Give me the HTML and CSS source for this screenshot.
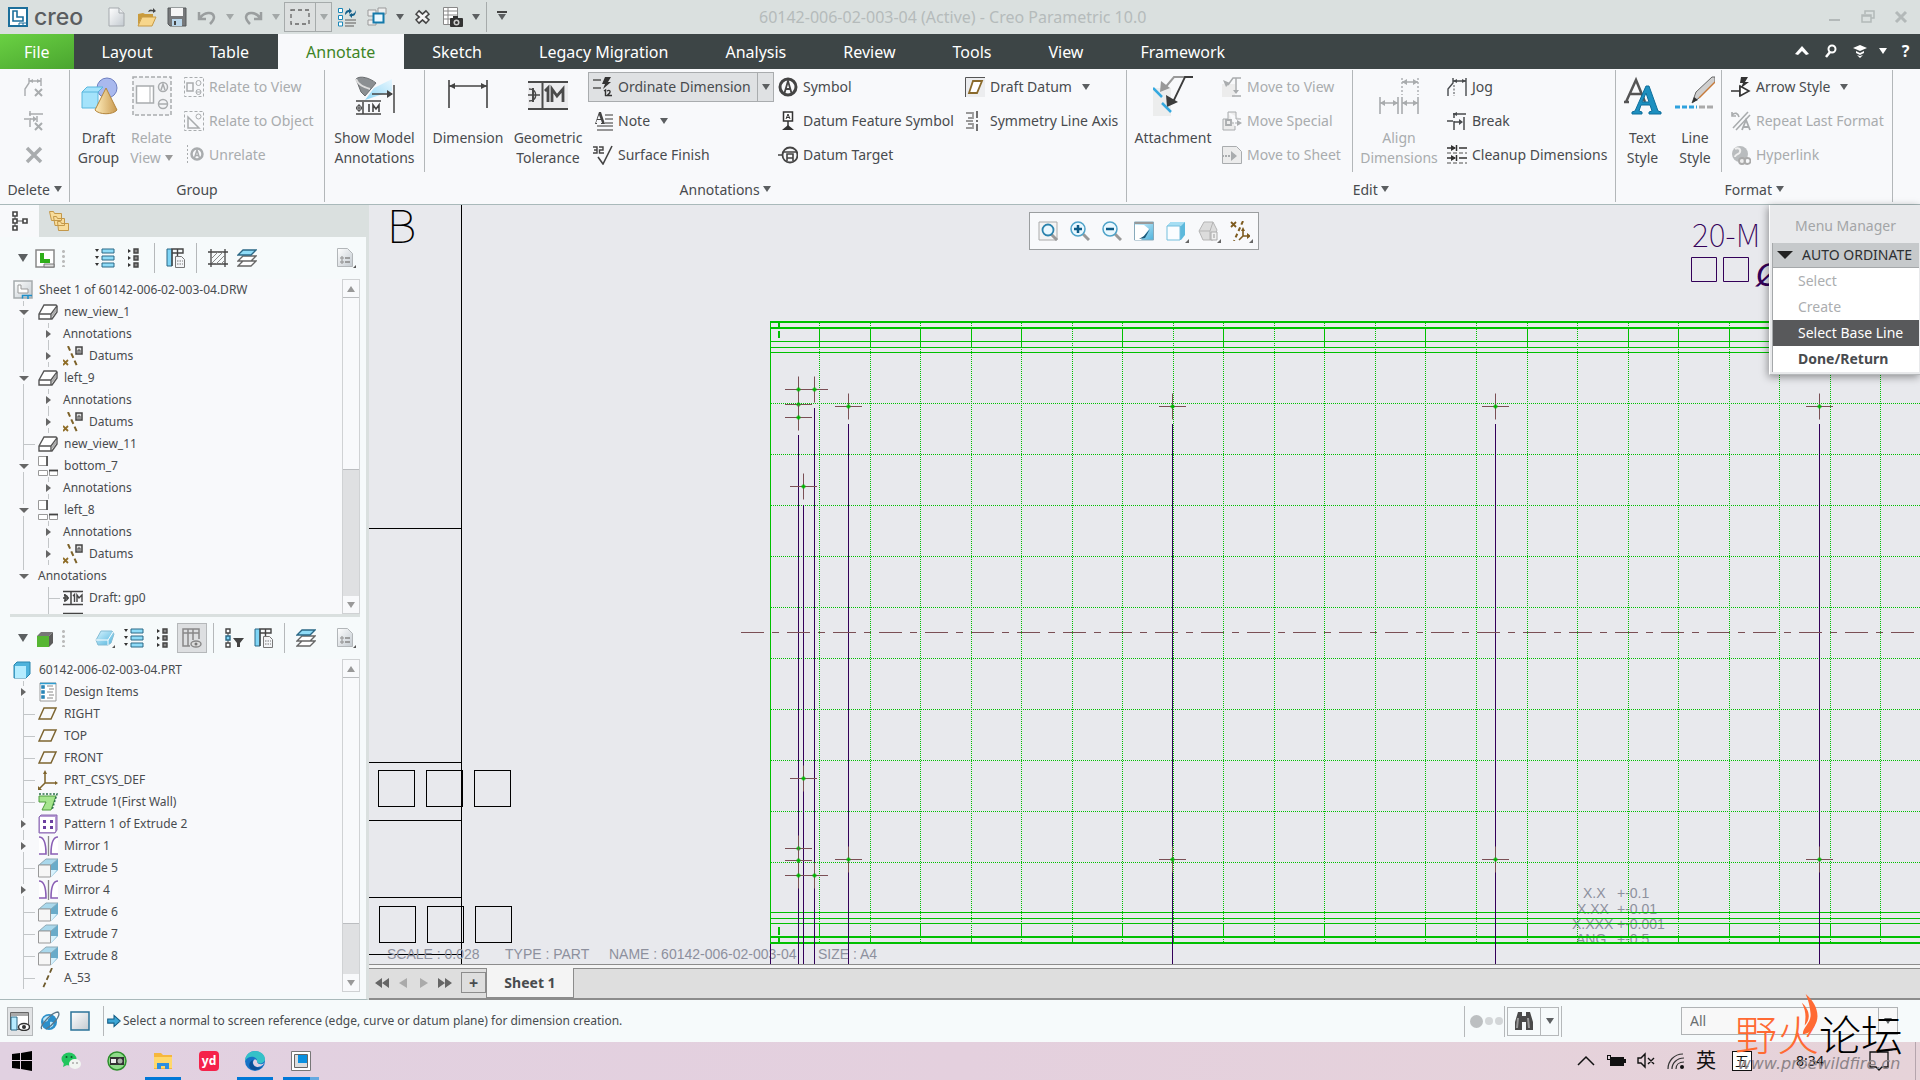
FILE: index.html
```html
<!DOCTYPE html>
<html lang="en">
<head>
    <meta charset="UTF-8">
    <meta name="viewport" content="width=device-width, initial-scale=1.0">
    <title>60142-006-02-003-04 (Active) - Creo Parametric 10.0</title>
    <link rel="stylesheet" href="styles.css">
</head>
<body>
    <!-- icon sprite -->
    <svg class="sprite" aria-hidden="true">
        <defs>
            <linearGradient id="gBlue" x1="0" y1="0" x2="1" y2="1"><stop offset="0" stop-color="#d8f4ff"/><stop offset="1" stop-color="#4fb3dc"/></linearGradient>
            <linearGradient id="gGrey" x1="0" y1="0" x2="1" y2="1"><stop offset="0" stop-color="#fff"/><stop offset="1" stop-color="#c3cad0"/></linearGradient>
            <linearGradient id="gSand" x1="0" y1="0" x2="1" y2="0"><stop offset="0" stop-color="#ffeebd"/><stop offset="1" stop-color="#c9994f"/></linearGradient>
            <linearGradient id="gBeam" x1="0" y1="1" x2="1" y2="0"><stop offset="0" stop-color="#8fd6f5"/><stop offset="1" stop-color="#e8f7ff"/></linearGradient>
        </defs>
        <symbol id="i-new" viewBox="0 0 20 20"><path d="M2 1h10l5 5v13H2z" fill="url(#gGrey)" stroke="#a4a9ad"/><path d="M12 1v5h5" fill="#e9ecee" stroke="#a4a9ad"/></symbol>
        <symbol id="i-open" viewBox="0 0 20 20"><path d="M1 7l5-1 2 1h8v3H5L1 18z" fill="#c99b3c"/><path d="M5 10h14l-4 9H1z" fill="#f7d68b" stroke="#c79a45"/><path d="M11 5c1-3 3-3 5-2V1l3 3-3 2V4.500c-2-.5-3 0-5 .5z" fill="#444"/></symbol>
        <symbol id="i-save" viewBox="0 0 20 20"><path d="M1 1h18v18H3l-2-2z" fill="#77797b" stroke="#55585a"/><path d="M4 1h12v8H4z" fill="#f6f6f6"/><path d="M5 12h10v7H5z" fill="#b9d6ea"/><path d="M7 14h2v4H7z" fill="#444"/></symbol>
        <symbol id="i-undo" viewBox="0 0 20 20"><path d="M2 5v7h7M3 11c4-6 13-7 14-1 0 3-2 5-4 7" fill="none" stroke="#9a9e9f" stroke-width="2.500"/></symbol>
        <symbol id="i-redo" viewBox="0 0 20 20"><path d="M18 5v7h-7M17 11C13 5 4 4 3 10c0 3 2 5 4 7" fill="none" stroke="#9a9e9f" stroke-width="2.500"/></symbol>
        <symbol id="i-select" viewBox="0 0 20 20"><path d="M1 3h18v14H1z" fill="none" stroke="#666" stroke-width="1.300" stroke-dasharray="4 3"/></symbol>
        <symbol id="i-regen" viewBox="0 0 20 20"><g fill="#fff" stroke="#1b87b8"><path d="M1.500 1.500h4v4h-4zM1.500 8.500h4v4h-4zM1.500 15h4v4h-4z"/></g><path d="M8 13h11M8 16h11M8 19h9" stroke="#888" stroke-width="1.500"/><path d="M8 8c0-4 2-5 4-5V1l3 3-3 3V5c-1 0-2 1-4 3zM19 3c0 5-2 6-4 6v2l-3-3 3-2v1c1 0 3-1 4-4z" fill="#16618c"/></symbol>
        <symbol id="i-windows" viewBox="0 0 20 20"><path d="M1 3h8v6H1zM1 13h8v5H1zM11 1h8v6h-8z" fill="#eee" stroke="#999"/><path d="M6.500 6.500h10v9h-10z" fill="#eaf8ff" stroke="#157aab" stroke-width="2"/></symbol>
        <symbol id="i-closewin" viewBox="0 0 20 20"><path d="M4 5l11 10M15 5L4 15" stroke="#444" stroke-width="6"/><path d="M5 6l9 8M14 6l-9 8" stroke="#f5f5f5" stroke-width="3"/></symbol>
        <symbol id="i-camera" viewBox="0 0 20 20"><path d="M.5.5h14v17H.5z" fill="#fff" stroke="#888"/><path d="M1 4h13M1 8h13M1 12h8M5 1v16" stroke="#888"/><rect x="7" y="11" width="13" height="9" rx="1" fill="#333"/><path d="M10 9h5v3h-5z" fill="#333"/><circle cx="13.500" cy="15.500" r="3" fill="#ccc"/><circle cx="13.500" cy="15.500" r="1.500" fill="#333"/></symbol>
        <symbol id="i-logo" viewBox="0 0 20 20"><path d="M1 1h18v18H1z" fill="#fff" stroke="#1c6f9b" stroke-width="2"/><path d="M5 4h4v6h6v4H5z" fill="none" stroke="#1c6f9b" stroke-width="1.600"/><path d="M11 19v-3h8M15 16v3" fill="none" stroke="#1c6f9b"/></symbol>

        <symbol id="i-jog" viewBox="0 0 20 20"><path d="M1 19v-7l5-6V1M19 1v18M6 4h13" fill="none" stroke="currentColor" stroke-width="1.400"/><path d="M7 8v11" stroke="currentColor" stroke-dasharray="2 1.500"/><path d="M6 4l4-2v4zM19 4l-4-2v4z" fill="currentColor"/></symbol>
        <symbol id="i-jogdel" viewBox="0 0 20 20"><path d="M1 19v-7l4-6V1M17 1v8M5 4h12" fill="none" stroke="currentColor" stroke-width="1.400"/><path d="M5 4l4-2v4zM17 4l-4-2v4z" fill="currentColor"/><path d="M11 12l7 7M18 12l-7 7" stroke="currentColor" stroke-width="2"/></symbol>
        <symbol id="i-break" viewBox="0 0 20 20"><path d="M0 10h6M7 2v5M7 10v9M6 3h13M17 6v13M7 11h7" stroke="currentColor" stroke-width="1.500"/><path d="M12 8l4 3-4 3zM6 3l4-2v4z" fill="currentColor"/></symbol>
        <symbol id="i-breakdel" viewBox="0 0 20 20"><path d="M0 8h5M6 0v5M6 7v9M5 3h14M13 5v6M6 8h6" stroke="currentColor" stroke-width="1.500"/><path d="M9 5l4 3-4 3z" fill="currentColor"/><path d="M11 12l7 7M18 12l-7 7" stroke="currentColor" stroke-width="2"/></symbol>
        <symbol id="i-x" viewBox="0 0 20 20"><path d="M3 3l14 14M17 3L3 17" stroke="currentColor" stroke-width="3.500"/></symbol>
        <symbol id="i-relview" viewBox="0 0 20 20"><path d="M.5.5h19v19H.5z" fill="none" stroke="currentColor" stroke-dasharray="3 2"/><path d="M3 6h6v8H3z" fill="none" stroke="currentColor" stroke-width="1.500"/><circle cx="14.500" cy="6" r="2.500" fill="none" stroke="currentColor"/><circle cx="14.500" cy="15" r="2.500" fill="none" stroke="currentColor"/><path d="M12 15h5" stroke="currentColor"/></symbol>
        <symbol id="i-relobj" viewBox="0 0 20 20"><path d="M.5.5h19v19H.5z" fill="none" stroke="currentColor" stroke-dasharray="3 2"/><path d="M4 6v11h11z" fill="none" stroke="currentColor" stroke-width="1.500"/><circle cx="14.500" cy="5.500" r="2.500" fill="none" stroke="currentColor"/></symbol>
        <symbol id="i-unrel" viewBox="0 0 20 20"><path d="M3.500 0v20" stroke="currentColor" stroke-dasharray="2 2"/><circle cx="13" cy="9" r="5.500" fill="none" stroke="currentColor" stroke-width="2.500"/><path d="M10.500 13L13 5l2.500 8M11 10.500h4" fill="none" stroke="currentColor" stroke-width="1.500"/></symbol>
        <symbol id="i-draft" viewBox="0 0 40 40"><circle cx="28" cy="12" r="10" fill="#a9b9ee" stroke="#6e7fc0"/><path d="M3 16l5-5h16l-5 5v16H3z" fill="#a4e3fb" stroke="#5ab7dd"/><path d="M3 16h16l5-5" fill="none" stroke="#5ab7dd"/><path d="M27 12l11 22c-4 5-18 5-22 0z" fill="url(#gSand)" stroke="#b3853c"/></symbol>
        <symbol id="i-relview-big" viewBox="0 0 40 40"><path d="M1 1h38v38H1z" fill="#f3f4f6" stroke="currentColor" stroke-width="1.500" stroke-dasharray="4 2"/><path d="M4.500 10h17v17h-17z" fill="#fff" stroke="currentColor" stroke-width="1.500"/><path d="M18 10v17" stroke="currentColor"/><circle cx="31" cy="11" r="4.500" fill="none" stroke="currentColor" stroke-width="1.500"/><path d="M29 14l2-6 2 6" fill="none" stroke="currentColor" stroke-width="1.500"/><circle cx="31" cy="28" r="4.500" fill="none" stroke="currentColor" stroke-width="1.500"/><path d="M27 28h8" stroke="currentColor" stroke-width="1.500"/></symbol>
        <symbol id="i-showmodel" viewBox="0 0 40 40"><path d="M19 12L37 3v12L10 24z" fill="url(#gBeam)"/><path d="M1 3c4-4 14-1 20 4L10 20 6 16z" fill="#8b8f92" stroke="#6b6e70"/><path d="M1 3c2 6 8 8 14 10" fill="none" stroke="#ddd" stroke-width="2"/><path d="M17 18h20M39 9v28" stroke="#444" stroke-width="1.500"/><path d="M32 14l6 4-6 4z" fill="#444"/><path d="M1 25h25M1 38h25M8 26v12" stroke="#444" stroke-width="1.500"/><circle cx="4" cy="32" r="2.500" fill="none" stroke="#444"/><path d="M1 32h6M4 28v8" stroke="#444"/><path d="M14 28v8M18 36v-7l3 4 3-4v7" fill="none" stroke="#444" stroke-width="1.600"/></symbol>
        <symbol id="i-dim" viewBox="0 0 40 40"><path d="M1 4v28M39 4v28M1 10h38" stroke="#444" stroke-width="1.600"/><path d="M1 10l6-3v6zM39 10l-6-3v6z" fill="#444"/></symbol>
        <symbol id="i-gtol" viewBox="0 0 40 40"><path d="M0 5h40v29H0z" fill="#ececee"/><path d="M0 6h40M0 33h40M14.500 6v27" stroke="#4a4a4a" stroke-width="2"/><path d="M5 12v14" stroke="#4a4a4a" stroke-width="2"/><path d="M1 13c9 0 9 12 0 12M0 19h12" fill="none" stroke="#4a4a4a" stroke-width="1.500"/><path d="M17 15l3-3v14M24 26V13l5 7 6-7v13" fill="none" stroke="#4a4a4a" stroke-width="2.800"/></symbol>
        <symbol id="i-ord" viewBox="0 0 20 20"><path d="M0 3h8M0 11h8" stroke="#555" stroke-width="1.500"/><path d="M12 0h6l-3 5h3l-8 7 2-5H9z" fill="#333"/><path d="M11 14l1.500-1v6M14 14c3-2 5 1 0 4.500h5" fill="none" stroke="#333" stroke-width="1.400"/></symbol>
        <symbol id="i-note" viewBox="0 0 20 20"><path d="M0 13h2L6 1h2l4 12h-4v-1h1L8 9H4l-1 3h1v1zM4.500 8h3L6 4z" fill="#444"/><path d="M12 4h8M12 8h8M12 12h8M4 15h16M4 19h16" stroke="#777" stroke-width="1.500"/></symbol>
        <symbol id="i-surf" viewBox="0 0 20 20"><path d="M0 2h4v6H0M1 5h3M6 2h4v3H6.500v3H11" fill="none" stroke="#444" stroke-width="1.400"/><path d="M5 12l5 7 9-18" fill="none" stroke="#444" stroke-width="1.600"/></symbol>
        <symbol id="i-symbol" viewBox="0 0 20 20"><circle cx="10" cy="10" r="8" fill="none" stroke="#444" stroke-width="3"/><path d="M6.500 16L10 4l3.500 12M8 12h4" fill="none" stroke="#444" stroke-width="1.800"/></symbol>
        <symbol id="i-dfs" viewBox="0 0 20 20"><path d="M5.500 1h9v9h-9z" fill="#fff" stroke="#333" stroke-width="1.500"/><path d="M8 8l2-5 2 5M8.500 6.500h3" fill="none" stroke="#333"/><path d="M10 10v6" stroke="#333" stroke-width="1.500"/><path d="M4 19l6-5 6 5z" fill="#333"/></symbol>
        <symbol id="i-dtarget" viewBox="0 0 20 20"><circle cx="12" cy="10" r="7.500" fill="none" stroke="#444" stroke-width="1.800"/><path d="M0 10h4M5 7h14M9 16V9h6v7M9 13h6" fill="none" stroke="#444" stroke-width="1.600"/></symbol>
        <symbol id="i-ddatum" viewBox="0 0 20 20"><path d="M0 0h20v20H0z" fill="#ecedef"/><path d="M.5 20V.5H20" fill="none" stroke="#555"/><path d="M8 4h9l-5 12H4z" fill="#fff" stroke="#8a6a2c" stroke-width="1.800"/></symbol>
        <symbol id="i-symline" viewBox="0 0 20 20"><path d="M1 2h7v5H3M1 10h7M1 17h7v-4H3" fill="none" stroke="#999" stroke-width="1.800"/><path d="M12 0v7M12 9v2M12 13v7" stroke="#444" stroke-width="1.500"/></symbol>
        <symbol id="i-attach" viewBox="0 0 40 40"><path d="M0 12h18v28H0z" fill="#eceded"/><path d="M36 1H21L11 13" fill="none" stroke="#999" stroke-width="2"/><path d="M7 16l1-11 9 7z" fill="#999"/><path d="M40 1h-8L20 26" fill="none" stroke="#3c3c3c" stroke-width="1.800"/><path d="M14 31l-1-12 12 7z" fill="#3c3c3c"/><path d="M0 12l9 9M9 27l9 9" stroke="#35a9e0" stroke-width="2.500"/></symbol>
        <symbol id="i-mvview" viewBox="0 0 20 20"><path d="M0 7h13v13H0z" fill="#ececec"/><path d="M19 1h-8L6 8M19 1h-5v14M10 19h9" fill="none" stroke="currentColor" stroke-width="1.500"/><path d="M1 3l3 7 4-4zM11 13h6l-3 4z" fill="currentColor"/></symbol>
        <symbol id="i-mvspec" viewBox="0 0 20 20"><path d="M6 1h8v7h5M6 1v7H1v11h12v-4" fill="#ececec" stroke="currentColor"/><path d="M4 9h5v5H4z" fill="none" stroke="currentColor" stroke-width="1.800"/><path d="M10 12h7" stroke="currentColor" stroke-dasharray="2 1"/><path d="M15 9l5 3-5 3z" fill="currentColor"/></symbol>
        <symbol id="i-mvsheet" viewBox="0 0 20 20"><path d="M.5 1.500h14l5 5v12H.500z" fill="#ececec" stroke="currentColor"/><path d="M0 11h12" stroke="currentColor" stroke-width="1.800" stroke-dasharray="2 1"/><path d="M9 6l6 5-6 5z" fill="currentColor"/></symbol>
        <symbol id="i-align" viewBox="0 0 40 40"><path d="M1 21v17M19 21v17M23 21v17M39 21v17M1 27h18M23 27h16M23 6h16" stroke="currentColor" stroke-width="1.600"/><path d="M23 2v17M39 2v17" stroke="currentColor" stroke-width="1.400" stroke-dasharray="2 2"/><path d="M1 27l5-3v6zM19 27l-5-3v6zM23 27l5-3v6zM39 27l-5-3v6zM23 6l5-3v6zM39 6l-5-3v6z" fill="currentColor"/></symbol>
        <symbol id="i-cleanup" viewBox="0 0 20 20"><path d="M0 3h8M0 13h8M12 3h8M12 13h8M9.500 0v6M9.500 10v6" stroke="#333" stroke-width="1.500"/><path d="M4 0l5 3-5 3zM4 10l5 3-5 3z" fill="#333"/><path d="M0 8h20M0 18h20" stroke="#888" stroke-dasharray="4 2" stroke-width="1.300"/></symbol>
        <symbol id="i-textstyle" viewBox="0 0 40 40"><path d="M3 26L13 4l9 22M6 18h12M1 26h5" fill="none" stroke="#555" stroke-width="2.500"/><path d="M9 38v-2l3-1L23 10h3l9 25 3 1v2H26v-2l3-1-2-6h-9l-2 6 3 1v2zM19 26h7l-3-9z" fill="#1d90c0" stroke="#0f6f9c"/></symbol>
        <symbol id="i-linestyle" viewBox="0 0 40 40"><path d="M0 31h22" stroke="#2fa2de" stroke-width="3" stroke-dasharray="5 2"/><path d="M24 31h16" stroke="#aaa" stroke-width="3" stroke-dasharray="6 2"/><path d="M17 27l4-11L37 1h3v5L24 22z" fill="#cfcfcf" stroke="#666"/><path d="M40 6L24 22" stroke="#c67a3a" stroke-width="1.500"/><path d="M17 27l2-6 4 3z" fill="#333"/></symbol>
        <symbol id="i-arrow" viewBox="0 0 20 20"><path d="M10 0h7l-3 5h4l-8 6 2-5H9z" fill="#333"/><path d="M0 14h18M9 9v10" stroke="#333" stroke-width="1.600"/><path d="M9 9l9 5-9 5z" fill="#fff" stroke="#333" stroke-width="1.600"/></symbol>
        <symbol id="i-repeat" viewBox="0 0 20 20"><path d="M2 17L17 1M5 19L19 4M1 4c3-3 6-2 7 2M1 1v4h4" fill="none" stroke="currentColor" stroke-width="1.600"/><path d="M11 19l4-10 4 10M12 16h6" fill="none" stroke="currentColor" stroke-width="1.800"/></symbol>
        <symbol id="i-link" viewBox="0 0 20 20"><circle cx="9" cy="9" r="8" fill="#b9bcbe"/><path d="M4 4c3-2 6 0 5 3s-5 2-5 5" fill="none" stroke="#eee" stroke-width="2"/><circle cx="11" cy="16" r="3" fill="#eee" stroke="#aaa" stroke-width="1.800"/><circle cx="16.500" cy="16" r="3" fill="none" stroke="#aaa" stroke-width="1.800"/></symbol>

        <symbol id="i-tree" viewBox="0 0 20 20"><path d="M5 5v10M6 10h8" stroke="#555"/><g fill="#fff" stroke="#444" stroke-width="1.600"><path d="M3 1h4v4H3zM3 8h4v4H3zM3 15h4v4H3zM13 8h4v4h-4z"/></g></symbol>
        <symbol id="i-folders" viewBox="0 0 20 20"><g fill="#f8dc9a" stroke="#c3984a"><path d="M.5.500h4l1 2h7v7h-10zM4.500 5.500h3l1 2h7v7H6zM8.500 10.500h3l1 2h7v7h-10z"/></g></symbol>
        <symbol id="i-drw" viewBox="0 0 20 20"><path d="M1 2h18v17H1z" fill="#fff" stroke="#888" stroke-width="1.500"/><path d="M5 5h4v6h6v4H5z" fill="#2fae1a"/><path d="M9 16h10v3H9z" fill="#ddd" stroke="#777"/></symbol>
        <symbol id="i-sheet" viewBox="0 0 20 20"><path d="M1 1h18v17H1z" fill="url(#gGrey)" stroke="#a5aaad" stroke-width="1.500"/><path d="M5 5h3v4h7v4H5z" fill="#fff" stroke="#999"/><path d="M9.500 18.500v-3H19M15 16v3" fill="none" stroke="#1d8fc9" stroke-width="1.500"/></symbol>
        <symbol id="i-expand" viewBox="0 0 20 20"><path d="M0 1h4L2 4zM0 8h4l-2 3zM0 15h4l-2 3z" fill="#333"/><path d="M7 1h12v4H7zM7 8h12v4H7zM7 15h12v4H7z" fill="#8fdcf8" stroke="#2b6886"/></symbol>
        <symbol id="i-collapse" viewBox="0 0 20 20"><path d="M4 1v4l3-2zM4 8v4l3-2zM4 15v4l3-2z" fill="#333"/><path d="M10 1h4v4h-4zM10 8h4v4h-4zM10 15h4v4h-4z" fill="#888" stroke="#444" stroke-width="1.400"/></symbol>
        <symbol id="i-cols" viewBox="0 0 20 20"><path d="M1 1h5v17H1z" fill="#7fd5f6" stroke="#2b6886"/><path d="M6 1h11v4H6zM11.500 1v10M6 5v13" fill="none" stroke="#444" stroke-width="1.400"/><path d="M9.500 8.500h6l3 3v8h-9z" fill="#f4f6f8" stroke="#777"/><path d="M11 13h6M11 16h6" stroke="#777" stroke-dasharray="1.500 1"/></symbol>
        <symbol id="i-hatch" viewBox="0 0 20 20"><path d="M0 4h20M0 16h20M3 1v18M17 1v18" stroke="#444" stroke-width="1.300"/><path d="M4 10l6-6M4 15L15 4M8 16l8-8M13 16l3-3" stroke="#888"/></symbol>
        <symbol id="i-layers" viewBox="0 0 20 20"><path d="M1 18l5-5h13l-5 5zM1 13l5-5h13l-5 5z" fill="#fff" stroke="#666" stroke-width="1.300"/><path d="M1 7l5-5h13l-5 5z" fill="#8fdcf8" stroke="#2b6886" stroke-width="1.300"/></symbol>
        <symbol id="i-page" viewBox="0 0 20 20"><path d="M1.500.5h10l5 5v13h-15z" fill="url(#gGrey)" stroke="#b2b6b9"/><circle cx="6" cy="10" r="1.200" fill="none" stroke="#888"/><circle cx="6" cy="14" r="1.200" fill="none" stroke="#888"/><path d="M9 10h5M9 14h5" stroke="#888" stroke-width="1.400"/><path d="M20 17v3h-3z" fill="#555"/></symbol>
        <symbol id="i-cube" viewBox="0 0 20 20"><path d="M2 8h12v11H2z" fill="#56b633"/><path d="M2 8l4-4h12l-4 4z" fill="#777"/><path d="M14 8l4-4v11l-4 4z" fill="#5c5c5c"/></symbol>
        <symbol id="i-solid" viewBox="0 0 20 20"><path d="M1 12l5-9h11l2 3-3 9-3 2H3z" fill="url(#gBlue)" stroke="#86bcd4"/><path d="M1 12h12l5-8M13 12v5" fill="none" stroke="#fff"/><path d="M20 17v3h-3z" fill="#555"/></symbol>
        <symbol id="i-coleye" viewBox="0 0 20 20"><path d="M1 1h16v4H1zM1 5v13h7M6 1v17M11 1v11M17 5v6" fill="none" stroke="#888" stroke-width="1.500"/><ellipse cx="14" cy="16" rx="5" ry="3" fill="#ddd" stroke="#888" stroke-width="1.400"/><circle cx="14" cy="16" r="1.500" fill="#777"/></symbol>
        <symbol id="i-filter" viewBox="0 0 20 20"><path d="M3 5v12" stroke="#444"/><path d="M1 1h4v4H1zM1 15h4v4H1z" fill="#fff" stroke="#444" stroke-width="1.400"/><path d="M1 8h4v4H1z" fill="#7fd5f6" stroke="#2b6886" stroke-width="1.400"/><path d="M8 10h11l-4 5v4h-3v-4z" fill="#444"/></symbol>
        <symbol id="i-view" viewBox="0 0 20 20"><path d="M1 12L6 3h12l1 1v6l-5 7H1z" fill="#fff" stroke="#555" stroke-width="1.400"/><path d="M1 12h12l6-8M13 12v5" fill="none" stroke="#555" stroke-width="1.400"/><path d="M14 12l4-6v4l-4 5z" fill="#aaa"/></symbol>
        <symbol id="i-datums" viewBox="0 0 20 20"><path d="M5 0l9 20" stroke="#7d6229" stroke-width="2" stroke-dasharray="5 3"/><path d="M0 14l5 5M5 14l-5 5" stroke="#8f6d27" stroke-width="1.800"/><path d="M13 1h6v7h-6z" fill="#ddd" stroke="#444" stroke-width="1.500"/><path d="M15 7V4h2v3" fill="none" stroke="#444"/></symbol>
        <symbol id="i-proj" viewBox="0 0 20 20"><path d="M.500.500h9v9h-9z" fill="#fff" stroke="#999"/><path d="M9 0v10" stroke="#555" stroke-width="1.800"/><path d="M.500 14.500h9v5h-9zM11.500 14.500h8v5h-8z" fill="#fff" stroke="#999"/><path d="M11 14.500h9" stroke="#444" stroke-width="1.800"/></symbol>
        <symbol id="i-gp" viewBox="0 0 20 20"><path d="M0 3.500h20M0 16.500h20M8 3v13" stroke="#444" stroke-width="1.500"/><path d="M2 6v8M1 7c5 1 5 5 0 6M0 10h6M10 8l1.500-1.500V14M14 14V7l2 3 3-3v7" fill="none" stroke="#444" stroke-width="1.400"/></symbol>
        <symbol id="i-part" viewBox="0 0 20 20"><path d="M1 5l3-3h13v12l-4 4H1z" fill="#4fb3dc" stroke="#2b86ae"/><path d="M2 6h11v12H2z" fill="#b4ecff"/></symbol>
        <symbol id="i-design" viewBox="0 0 20 20"><path d="M2 1h16v18H2z" fill="#fff" stroke="#999"/><path d="M2 1.500h16" stroke="#2f9dd0" stroke-width="1.500"/><path d="M4 4h2v2H4zM4 9h2v2H4zM4 14h2v2H4z" fill="none" stroke="#1d7fb3" stroke-width="1.500"/><path d="M9 4h6M11 7h5M9 10h6M11 13h5M9 16h6" stroke="#888"/></symbol>
        <symbol id="i-plane" viewBox="0 0 20 20"><path d="M6 4h12l-5 11H1z" fill="none" stroke="#7d6531" stroke-width="1.500"/></symbol>
        <symbol id="i-csys" viewBox="0 0 20 20"><path d="M7 2v11h11M7 13l-6 6" fill="none" stroke="#7d6229" stroke-width="1.500"/><path d="M5 4l2-4 2 4zM17 11l3 2-3 2zM0 16v4h4z" fill="#7d6229"/></symbol>
        <symbol id="i-wall" viewBox="0 0 20 20"><path d="M1 4h17l-5 14H4l4-8H1z" fill="#a5e58d" stroke="#4f9c3c"/><path d="M1 2h18l-5 16" fill="none" stroke="#2a6f4a" stroke-width="1.500" stroke-dasharray="2 1.500"/></symbol>
        <symbol id="i-pattern" viewBox="0 0 20 20"><path d="M1 3l2-2h16v15l-2 3H1z" fill="#b79bd3" stroke="#8a68b1"/><path d="M2 3h15v15H2z" fill="#fff"/><path d="M5 6h3v3H5zM12 6h3v3h-3zM5 12h3v3H5zM12 12h3v3h-3z" fill="#6b3fa0"/></symbol>
        <symbol id="i-mirror" viewBox="0 0 20 20"><path d="M10.500 0v20" stroke="#888" stroke-width="1.300"/><path d="M1 1c5 0 7 5 7 17H1M20 1c-5 0-7 5-7 17h7" fill="#fff" stroke="#8a5fb5" stroke-width="1.600"/></symbol>
        <symbol id="i-extrude" viewBox="0 0 20 20"><path d="M1 7l7-6h12l-7 6z" fill="#a9d8ec" stroke="#8fa9b5"/><path d="M13 7l7-6v11l-7 7z" fill="#69abc9"/><path d="M13 19l6-7h-6z" fill="#d8f2fd"/><path d="M.5 7h12v12H.500z" fill="#f6f6f6" stroke="#999"/></symbol>
        <symbol id="i-axis" viewBox="0 0 20 20"><path d="M14 0L5 20" stroke="#6e5a2c" stroke-width="1.800" stroke-dasharray="5 3"/></symbol>

        <symbol id="i-refit" viewBox="0 0 20 20"><path d="M1 1h18v18H1z" fill="#f4f4f4" stroke="#aaa"/><path d="M13 13l6 6" stroke="#999" stroke-width="3"/><circle cx="10" cy="9" r="5.500" fill="#eaf8ff" stroke="#2b83ad" stroke-width="1.800"/></symbol>
        <symbol id="i-zin" viewBox="0 0 20 20"><path d="M12 12l7 7" stroke="#999" stroke-width="3"/><circle cx="8" cy="8" r="7" fill="#eaf8ff" stroke="#4fa3c9" stroke-width="1.500"/><path d="M8 4v8M4 8h8" stroke="#0f5c87" stroke-width="2.500"/></symbol>
        <symbol id="i-zout" viewBox="0 0 20 20"><path d="M12 12l7 7" stroke="#999" stroke-width="3"/><circle cx="8" cy="8" r="7" fill="#eaf8ff" stroke="#4fa3c9" stroke-width="1.500"/><path d="M4 8h8" stroke="#0f5c87" stroke-width="2.500"/></symbol>
        <symbol id="i-repaint" viewBox="0 0 20 20"><path d="M.5 1h19v18H.500z" fill="url(#gBlue)" stroke="#8ab"/><path d="M1 4h9l5 4-8 11H1z" fill="#fff"/><path d="M1 1h18v2H1z" fill="#999"/><path d="M16 8L10 15l-5 3 6-1z" fill="#1b5776"/></symbol>
        <symbol id="i-shade" viewBox="0 0 20 20"><path d="M1 5l4-4h14v13l-4 5H1z" fill="#5db9dc"/><path d="M1 5l4-4h14l-4 4z" fill="#a5def3"/><path d="M1 5h13v14H1z" fill="#fafdff" stroke="#74bfdd"/></symbol>
        <symbol id="i-saved" viewBox="0 0 20 20"><path d="M1 10l5-9h9l4 8-4 10H5z" fill="#dcdcdc" stroke="#b5b5b5"/><path d="M1 10h11l3-9M12 10v9" fill="none" stroke="#b5b5b5"/><path d="M13 11h6v8h-6z" fill="#f0f0f0" stroke="#aaa"/><path d="M16 13v4" stroke="#999"/></symbol>
        <symbol id="i-dfilter" viewBox="0 0 20 20"><path d="M1 1l5 5M6 1L1 6" stroke="#7d5b1f" stroke-width="1.800"/><path d="M13 0L4 20" stroke="#7d5b1f" stroke-width="2" stroke-dasharray="4 3"/><path d="M13 8v7h6M13 15l-4 4" fill="none" stroke="#7d5b1f" stroke-width="1.600"/><path d="M11 10l2-4 2 4zM17 12l4 3-4 3z" fill="#7d5b1f"/></symbol>

        <symbol id="i-nav" viewBox="0 0 20 20"><path d="M.5 1.500h18v17H.500z" fill="#fff" stroke="#666"/><path d="M1 2h17v3H1z" fill="#aaa"/><path d="M1 6h6v13H1z" fill="#b9ecff" stroke="#2b6886"/><ellipse cx="14" cy="16" rx="5.500" ry="3.500" fill="#fff" stroke="#333" stroke-width="1.500"/><circle cx="14" cy="16" r="2" fill="#333"/></symbol>
        <symbol id="i-globe" viewBox="0 0 20 20"><circle cx="9" cy="11" r="8" fill="#2b8fca"/><path d="M3 8c2-3 5-4 7-3 1 2-2 2-2 4s-3 1-4 3zM10 11c3-1 4 1 3 4l-3 2z" fill="#bfe8fb"/><path d="M2 18C-2 16 12 1 18 1c4 3-6 14-12 17" fill="none" stroke="#5b7789" stroke-width="1.300"/></symbol>
        <symbol id="i-full" viewBox="0 0 20 20"><path d="M1 1h18v18H1z" fill="url(#gGrey)" stroke="#2b7399" stroke-width="1.500"/></symbol>
        <symbol id="i-go" viewBox="0 0 20 20"><path d="M1 7h9V2l9 8-9 8v-5H1z" fill="#3ba6d6" stroke="#155e86" stroke-width="1.500"/></symbol>
        <symbol id="i-binoc" viewBox="0 0 20 20"><path d="M4 1h4v4h4V1h4l3 10v8h-7v-8H8v8H1v-8z" fill="#4a4a4a"/><path d="M4 7l-1 10M14 7l1 10" stroke="#999" stroke-width="2"/></symbol>

        <symbol id="t-win" viewBox="0 0 20 20"><path d="M0 3l8-1v7H0zM9 2l11-2v9H9zM0 10h8v8l-8-1zM9 10h11v10L9 18z" fill="#000"/></symbol>
        <symbol id="t-wechat" viewBox="0 0 20 20"><ellipse cx="8" cy="8" rx="7.500" ry="6.500" fill="#22c55e"/><path d="M3 12l-1 4 4-2z" fill="#22c55e"/><ellipse cx="14" cy="13" rx="6" ry="5" fill="#f1f5f1"/><circle cx="5.500" cy="6" r="1" fill="#14532d"/><circle cx="10.500" cy="6" r="1" fill="#14532d"/><circle cx="12" cy="12" r=".8" fill="#777"/><circle cx="16" cy="12" r=".8" fill="#777"/></symbol>
        <symbol id="t-cam" viewBox="0 0 20 20"><circle cx="10" cy="10" r="9" fill="#8fdc8a" stroke="#2d8f2c" stroke-width="1.500"/><path d="M3 6h14v8H3z" fill="#333"/><path d="M4 8h5v4H4z" fill="#eee"/><circle cx="13" cy="10" r="2.500" fill="#aab5aa"/></symbol>
        <symbol id="t-folder" viewBox="0 0 20 20"><path d="M1 2h7l2 2h9v14H1z" fill="#f6b73c"/><path d="M1 6h18v11H1z" fill="#ffd86b"/><path d="M4 18v-6h12v6h-4v-3H8v3z" fill="#2d8fe0"/></symbol>
        <symbol id="t-edge" viewBox="0 0 20 20"><circle cx="10" cy="10" r="10" fill="#1673c6"/><path d="M0 10C0 4 5 0 10 0c6 0 10 4 10 8 0 5-8 6-8 2 1-4-8-7-12 0z" fill="#35c1c8"/><path d="M8 9c-2 5 3 9 9 7-3 3-8 4-11 2S4 10 8 9z" fill="#0c4f96"/><path d="M9 9c1-1 3 0 3 1 0 4 5 4 7 2-1 3-5 4-7 4-4-1-5-5-3-7z" fill="#e2d2e2"/></symbol>
        <symbol id="t-creo" viewBox="0 0 20 20"><path d="M.5.500h19v19H.500z" fill="#fff" stroke="#777"/><path d="M3.500 3.500h13v13h-13z" fill="#ddd" stroke="#666"/><path d="M7 4h9v8H7z" fill="#0a90e0"/></symbol>
    </svg>

    <header class="titlebar">
        <div class="brand"><svg class="ic"><use href="#i-logo"/></svg><span>creo</span></div>
        <div class="quick">
            <button aria-label="New"><svg class="ic"><use href="#i-new"/></svg></button>
            <button aria-label="Open"><svg class="ic"><use href="#i-open"/></svg></button>
            <button aria-label="Save"><svg class="ic"><use href="#i-save"/></svg></button>
            <button aria-label="Undo"><svg class="ic"><use href="#i-undo"/></svg></button>
            <button class="drop dim" aria-label="Undo list"><i class="caret"></i></button>
            <button aria-label="Redo"><svg class="ic"><use href="#i-redo"/></svg></button>
            <button class="drop dim" aria-label="Redo list"><i class="caret"></i></button>
            <div class="split">
                <button aria-label="Select"><svg class="ic"><use href="#i-select"/></svg></button>
                <button class="drop dim" aria-label="Select options"><i class="caret"></i></button>
            </div>
            <button aria-label="Regenerate"><svg class="ic"><use href="#i-regen"/></svg></button>
            <button aria-label="Windows"><svg class="ic"><use href="#i-windows"/></svg></button>
            <button class="drop" aria-label="Windows list"><i class="caret"></i></button>
            <button aria-label="Close window"><svg class="ic"><use href="#i-closewin"/></svg></button>
            <button aria-label="Capture"><svg class="ic"><use href="#i-camera"/></svg></button>
            <button class="drop" aria-label="Capture options"><i class="caret"></i></button>
            <button class="custom" aria-label="Customize toolbar"><i class="caret"></i></button>
        </div>
        <div class="doc-title">60142-006-02-003-04 (Active) - Creo Parametric 10.0</div>
        <div class="win-buttons">
            <button aria-label="Minimize"><svg viewBox="0 0 14 14"><path d="M1 9h11v2H1z" fill="#b3b9b9"/></svg></button>
            <button aria-label="Restore"><svg viewBox="0 0 14 14"><path d="M4 4V1h9v7h-3M1 5h9v7H1zM1 6h9" fill="none" stroke="#b3b9b9" stroke-width="1.500"/></svg></button>
            <button aria-label="Close"><svg viewBox="0 0 14 14"><path d="M2 2l10 10M12 2L2 12" stroke="#b3b9b9" stroke-width="3"/></svg></button>
        </div>
    </header>

    <nav class="tabs">
        <button class="tab file">File</button>
        <button class="tab">Layout</button>
        <button class="tab">Table</button>
        <button class="tab active">Annotate</button>
        <button class="tab">Sketch</button>
        <button class="tab">Legacy Migration</button>
        <button class="tab">Analysis</button>
        <button class="tab">Review</button>
        <button class="tab">Tools</button>
        <button class="tab">View</button>
        <button class="tab">Framework</button>
        <div class="tab-tools">
            <button aria-label="Minimize ribbon"><svg viewBox="0 0 14 14"><path d="M0 10l7-8 7 8-3 1-4-4-4 4z" fill="#fff"/></svg></button>
            <button aria-label="Search"><svg viewBox="0 0 14 14"><circle cx="8" cy="5" r="3.500" fill="none" stroke="#fff" stroke-width="2"/><path d="M6 8l-4 5" stroke="#fff" stroke-width="2.500"/></svg></button>
            <button aria-label="Learning"><svg viewBox="0 0 14 14"><path d="M0 4l7-3 7 3-7 3z" fill="#fff"/><path d="M3 7l4 2 4-2v2l-4 2-4-2zM4 11l3 1 3-1-3 3z" fill="#fff"/></svg></button>
            <button class="drop" aria-label="Learning options"><i class="caret"></i></button>
            <button class="help">?</button>
        </div>
    </nav>

    <section class="ribbon">
        <div class="group g-delete">
            <div class="group-body">
                <div class="col">
                    <button class="small off" aria-label="Delete jog"><svg class="ic"><use href="#i-jogdel"/></svg></button>
                    <button class="small off" aria-label="Delete break"><svg class="ic"><use href="#i-breakdel"/></svg></button>
                    <button class="small off" aria-label="Delete"><svg class="ic"><use href="#i-x"/></svg></button>
                </div>
            </div>
            <div class="group-name">Delete <i class="caret"></i></div>
        </div>
        <div class="group g-group">
            <div class="group-body">
                <button class="big w53"><svg class="ic-big"><use href="#i-draft"/></svg><span>Draft<br>Group</span></button>
                <button class="big w53 off"><svg class="ic-big"><use href="#i-relview-big"/></svg><span>Relate<br>View<i class="caret"></i></span></button>
                <div class="col">
                    <button class="small off"><svg class="ic"><use href="#i-relview"/></svg>Relate to View</button>
                    <button class="small off"><svg class="ic"><use href="#i-relobj"/></svg>Relate to Object</button>
                    <button class="small off"><svg class="ic"><use href="#i-unrel"/></svg>Unrelate</button>
                </div>
            </div>
            <div class="group-name">Group</div>
        </div>
        <div class="group g-annot">
            <div class="group-body">
                <button class="big w100 ruled"><svg class="ic-big"><use href="#i-showmodel"/></svg><span>Show Model<br>Annotations</span></button>
                <button class="big w86"><svg class="ic-big"><use href="#i-dim"/></svg><span>Dimension</span></button>
                <button class="big w74"><svg class="ic-big"><use href="#i-gtol"/></svg><span>Geometric<br>Tolerance</span></button>
                <div class="col c-ord">
                    <div class="pressed">
                        <button class="small"><svg class="ic"><use href="#i-ord"/></svg>Ordinate Dimension</button>
                        <button class="drop" aria-label="Dimension types"><i class="caret"></i></button>
                    </div>
                    <button class="small"><svg class="ic"><use href="#i-note"/></svg>Note<i class="caret"></i></button>
                    <button class="small"><svg class="ic"><use href="#i-surf"/></svg>Surface Finish</button>
                </div>
                <div class="col c-sym">
                    <button class="small"><svg class="ic"><use href="#i-symbol"/></svg>Symbol</button>
                    <button class="small"><svg class="ic"><use href="#i-dfs"/></svg>Datum Feature Symbol</button>
                    <button class="small"><svg class="ic"><use href="#i-dtarget"/></svg>Datum Target</button>
                </div>
                <div class="col">
                    <button class="small"><svg class="ic"><use href="#i-ddatum"/></svg>Draft Datum<i class="caret"></i></button>
                    <button class="small"><svg class="ic"><use href="#i-symline"/></svg>Symmetry Line Axis</button>
                </div>
            </div>
            <div class="group-name">Annotations <i class="caret"></i></div>
        </div>
        <div class="group g-edit">
            <div class="group-body">
                <button class="big w92"><svg class="ic-big"><use href="#i-attach"/></svg><span>Attachment</span></button>
                <div class="col c-move">
                    <button class="small off"><svg class="ic"><use href="#i-mvview"/></svg>Move to View</button>
                    <button class="small off"><svg class="ic"><use href="#i-mvspec"/></svg>Move Special</button>
                    <button class="small off"><svg class="ic"><use href="#i-mvsheet"/></svg>Move to Sheet</button>
                </div>
                <button class="big w92 off"><svg class="ic-big"><use href="#i-align"/></svg><span>Align<br>Dimensions</span></button>
                <div class="col">
                    <button class="small"><svg class="ic"><use href="#i-jog"/></svg>Jog</button>
                    <button class="small"><svg class="ic"><use href="#i-break"/></svg>Break</button>
                    <button class="small"><svg class="ic"><use href="#i-cleanup"/></svg>Cleanup Dimensions</button>
                </div>
            </div>
            <div class="group-name">Edit <i class="caret"></i></div>
        </div>
        <div class="group g-format">
            <div class="group-body">
                <button class="big w53"><svg class="ic-big"><use href="#i-textstyle"/></svg><span>Text<br>Style</span></button>
                <button class="big w53 ruled"><svg class="ic-big"><use href="#i-linestyle"/></svg><span>Line<br>Style</span></button>
                <div class="col c-fmt">
                    <button class="small"><svg class="ic"><use href="#i-arrow"/></svg>Arrow Style<i class="caret"></i></button>
                    <button class="small off"><svg class="ic"><use href="#i-repeat"/></svg>Repeat Last Format</button>
                    <button class="small off"><svg class="ic"><use href="#i-link"/></svg>Hyperlink</button>
                </div>
            </div>
            <div class="group-name">Format <i class="caret"></i></div>
        </div>
    </section>

    <main class="work">
        <aside class="navigator">
            <div class="nav-tabs">
                <button class="nav-tab active" aria-label="Tree"><svg class="ic"><use href="#i-tree"/></svg></button>
                <button class="nav-tab" aria-label="Folders"><svg class="ic"><use href="#i-folders"/></svg></button>
            </div>
            <section class="pane drawing-pane">
                <div class="toolbar">
                    <button class="drop" aria-label="Tree menu"><i class="caret"></i></button>
                    <button class="kind" aria-label="Drawing tree"><svg class="ic"><use href="#i-drw"/></svg></button>
                    <span class="grip"></span>
                    <button aria-label="Expand"><svg class="ic"><use href="#i-expand"/></svg></button>
                    <button aria-label="Collapse"><svg class="ic"><use href="#i-collapse"/></svg></button>
                    <span class="rule"></span>
                    <button aria-label="Columns"><svg class="ic"><use href="#i-cols"/></svg></button>
                    <span class="rule"></span>
                    <button aria-label="Hatching"><svg class="ic"><use href="#i-hatch"/></svg></button>
                    <button aria-label="Layers"><svg class="ic"><use href="#i-layers"/></svg></button>
                    <button class="last" aria-label="Settings"><svg class="ic"><use href="#i-page"/></svg></button>
                </div>
                <div class="tree-box">
                    <ul class="tree">
                        <li class="lv0"><svg class="ic"><use href="#i-sheet"/></svg>Sheet 1 of 60142-006-02-003-04.DRW</li>
                        <li class="lv1"><i class="tw open"></i><svg class="ic"><use href="#i-view"/></svg>new_view_1</li>
                        <li class="lv2"><i class="tw"></i>Annotations</li>
                        <li class="lv2"><i class="tw"></i><svg class="ic"><use href="#i-datums"/></svg>Datums</li>
                        <li class="lv1"><i class="tw open"></i><svg class="ic"><use href="#i-view"/></svg>left_9</li>
                        <li class="lv2"><i class="tw"></i>Annotations</li>
                        <li class="lv2"><i class="tw"></i><svg class="ic"><use href="#i-datums"/></svg>Datums</li>
                        <li class="lv1"><i class="leaf"></i><svg class="ic"><use href="#i-view"/></svg>new_view_11</li>
                        <li class="lv1"><i class="tw open"></i><svg class="ic"><use href="#i-proj"/></svg>bottom_7</li>
                        <li class="lv2"><i class="tw"></i>Annotations</li>
                        <li class="lv1"><i class="tw open"></i><svg class="ic"><use href="#i-proj"/></svg>left_8</li>
                        <li class="lv2"><i class="tw"></i>Annotations</li>
                        <li class="lv2"><i class="tw"></i><svg class="ic"><use href="#i-datums"/></svg>Datums</li>
                        <li class="lv1 end"><i class="tw open"></i>Annotations</li>
                        <li class="lv2 only"><i class="leaf"></i><svg class="ic"><use href="#i-gp"/></svg>Draft: gp0</li>
                        <li class="lv2 only"><i class="leaf"></i><svg class="ic"><use href="#i-gp"/></svg></li>
                    </ul>
                    <div class="scroll">
                        <button aria-label="Scroll up"><i class="caret up"></i></button>
                        <div class="track"><div class="thumb" style="height: 58%"></div></div>
                        <button aria-label="Scroll down"><i class="caret"></i></button>
                    </div>
                </div>
            </section>
            <section class="pane model-pane">
                <div class="toolbar">
                    <button class="drop" aria-label="Tree menu"><i class="caret"></i></button>
                    <button class="kind" aria-label="Model tree"><svg class="ic"><use href="#i-cube"/></svg></button>
                    <span class="grip"></span>
                    <button aria-label="Show"><svg class="ic"><use href="#i-solid"/></svg></button>
                    <button aria-label="Expand"><svg class="ic"><use href="#i-expand"/></svg></button>
                    <button aria-label="Collapse"><svg class="ic"><use href="#i-collapse"/></svg></button>
                    <button class="on" aria-label="Column display"><svg class="ic"><use href="#i-coleye"/></svg></button>
                    <span class="rule"></span>
                    <button aria-label="Filters"><svg class="ic"><use href="#i-filter"/></svg></button>
                    <button aria-label="Columns"><svg class="ic"><use href="#i-cols"/></svg></button>
                    <span class="rule"></span>
                    <button aria-label="Layers"><svg class="ic"><use href="#i-layers"/></svg></button>
                    <button class="last" aria-label="Settings"><svg class="ic"><use href="#i-page"/></svg></button>
                </div>
                <div class="tree-box">
                    <ul class="tree">
                        <li class="lv0"><svg class="ic"><use href="#i-part"/></svg>60142-006-02-003-04.PRT</li>
                        <li class="lv1"><i class="tw"></i><svg class="ic"><use href="#i-design"/></svg>Design Items</li>
                        <li class="lv1"><i class="leaf"></i><svg class="ic"><use href="#i-plane"/></svg>RIGHT</li>
                        <li class="lv1"><i class="leaf"></i><svg class="ic"><use href="#i-plane"/></svg>TOP</li>
                        <li class="lv1"><i class="leaf"></i><svg class="ic"><use href="#i-plane"/></svg>FRONT</li>
                        <li class="lv1"><i class="leaf"></i><svg class="ic"><use href="#i-csys"/></svg>PRT_CSYS_DEF</li>
                        <li class="lv1"><i class="leaf"></i><svg class="ic"><use href="#i-wall"/></svg>Extrude 1(First Wall)</li>
                        <li class="lv1"><i class="tw"></i><svg class="ic"><use href="#i-pattern"/></svg>Pattern 1 of Extrude 2</li>
                        <li class="lv1"><i class="tw"></i><svg class="ic"><use href="#i-mirror"/></svg>Mirror 1</li>
                        <li class="lv1"><i class="leaf"></i><svg class="ic"><use href="#i-extrude"/></svg>Extrude 5</li>
                        <li class="lv1"><i class="tw"></i><svg class="ic"><use href="#i-mirror"/></svg>Mirror 4</li>
                        <li class="lv1"><i class="leaf"></i><svg class="ic"><use href="#i-extrude"/></svg>Extrude 6</li>
                        <li class="lv1"><i class="leaf"></i><svg class="ic"><use href="#i-extrude"/></svg>Extrude 7</li>
                        <li class="lv1"><i class="leaf"></i><svg class="ic"><use href="#i-extrude"/></svg>Extrude 8</li>
                        <li class="lv1"><i class="leaf"></i><svg class="ic"><use href="#i-axis"/></svg>A_53</li>
                    </ul>
                    <div class="scroll">
                        <button aria-label="Scroll up"><i class="caret up"></i></button>
                        <div class="track"><div class="thumb" style="height: 83%"></div></div>
                        <button aria-label="Scroll down"><i class="caret"></i></button>
                    </div>
                </div>
            </section>
        </aside>

        <section class="graphics">
            <div class="canvas">
                <svg class="drawing">
                    <defs>
                        <g id="cross"><path d="M-13.500 0h27M0-13v26" stroke="#7a4f55"/><path d="M-2 0h4M0-2v4" stroke="#00b400" stroke-width="2"/></g>
                    </defs>
                    <g transform="translate(-369 -205)" fill="none">
                        <!-- sheet border -->
                        <g stroke="#000" shape-rendering="crispEdges">
                            <path d="M461.500 205V1964M369 528.500h92M369 762.500h92M369 820.500h92M369 897.500h92M369 954.500h92"/>
                            <path d="M378.500 770.500h36v36h-36zM426.500 770.500h36v36h-36zM474.500 770.500h36v36h-36z"/>
                            <path d="M379.500 906.500h36v36h-36zM427.500 906.500h36v36h-36zM475.500 906.500h36v36h-36z"/>
                        </g>
                        <text class="stroke-text zone" x="387" y="243">B</text>

                        <!-- info line -->
                        <g class="info">
                            <text x="387" y="959">SCALE : 0.028</text>
                            <text x="505" y="959">TYPE : PART</text>
                            <text x="609" y="959">NAME : 60142-006-02-003-04</text>
                            <text x="818" y="959">SIZE : A4</text>
                            <text x="1583" y="898">X.X</text><text x="1617" y="898">+-0.1</text>
                            <text x="1577" y="914">X.XX</text><text x="1617" y="914">+-0.01</text>
                            <text x="1572" y="929">X.XXX</text><text x="1617" y="929">+-0.001</text>
                            <text x="1576" y="944">ANG</text><text x="1617" y="944">+-0.5</text>
                        </g>

                        <!-- grating -->
                        <g stroke="#00c000" shape-rendering="crispEdges">
                            <path stroke-dasharray="1 1" d="M819.500 323V942M870.500 323V942M920.500 323V942M971.500 323V942M1021.500 323V942M1072.500 323V942M1122.500 323V942M1173.500 323V942M1223.500 323V942M1274.500 323V942M1324.500 323V942M1375.500 323V942M1425.500 323V942M1476.500 323V942M1527.500 323V942M1577.500 323V942M1628.500 323V942M1678.500 323V942M1729.500 323V942M1779.500 323V942M1830.500 323V942M1880.500 323V942"/>
                            <path stroke-dasharray="1 1" d="M771 403.500H2920M771 454.500H2920M771 505.500H2920M771 556.500H2920M771 607.500H2920M771 658.500H2920M771 709.500H2920M771 760.500H2920M771 811.500H2920M771 862.500H2920"/>
                            <path d="M819.500 329v18M870.500 329v18M920.500 329v18M971.500 329v18M1021.500 329v18M1122.500 329v18M1223.500 329v18M1324.500 329v18M1425.500 329v18M1527.500 329v18M1628.500 329v18M1678.500 329v18M1729.500 329v18"/>
                            <path d="M819.500 924v12M920.500 924v12M1021.500 924v12M1122.500 924v12M1223.500 924v12M1324.500 924v12M1425.500 924v12M1527.500 924v12M1628.500 924v12M1729.500 924v12M1830.500 924v12M1880.500 924v12M870.500 938v4M971.500 938v4M1072.500 938v4M1173.500 938v4M1678.500 938v4M1779.500 938v4"/>
                            <path d="M770.500 321v622M770 341.500H2920M770 347.500H2920M770 352.500H2920M770 912.500H2920M770 918.500H2920M770 923.500H2920"/>
                            <path stroke-width="2" d="M770 322H2920M770 328H2920M770 937H2920M770 943H2920M779 323v5M779 331v7M779 927v8M779 938v4"/>
                        </g>

                        <!-- witness lines -->
                        <g stroke="#330059" shape-rendering="crispEdges">
                            <path d="M770.500 944v1020M798.500 435v1529M803.500 505v1459M814.500 408v1556M848.500 424v1540M1172.500 424v1540M1495.500 424v1540M1819.500 424v1540"/>
                        </g>
                        <path d="M741 632.500H2920" stroke="#7a4f55" stroke-dasharray="23 8 7 8"/>
                        <use href="#cross" x="798.500" y="389.500"/><use href="#cross" x="814.500" y="389.500"/>
                        <use href="#cross" x="798.500" y="404.500"/><use href="#cross" x="798.500" y="417.500"/>
                        <use href="#cross" x="803.500" y="486.500"/><use href="#cross" x="803.500" y="778.500"/>
                        <use href="#cross" x="798.500" y="848.500"/><use href="#cross" x="798.500" y="860.500"/>
                        <use href="#cross" x="798.500" y="875.500"/><use href="#cross" x="814.500" y="875.500"/>
                        <use href="#cross" x="848.500" y="406.500"/><use href="#cross" x="848.500" y="859.500"/>
                        <use href="#cross" x="1172.500" y="406.500"/><use href="#cross" x="1172.500" y="859.500"/>
                        <use href="#cross" x="1495.500" y="406.500"/><use href="#cross" x="1495.500" y="859.500"/>
                        <use href="#cross" x="1819.500" y="406.500"/><use href="#cross" x="1819.500" y="859.500"/>

                        <!-- thread callout -->
                        <text class="stroke-text callout" x="1692" y="247">20-M</text>
                        <path d="M1691.500 257.500h25v24h-25zM1723.500 257.500h25v24h-25z" stroke="#330059"/>
                        <text class="stroke-text dia" x="1756" y="286">Ø</text>
                    </g>
                </svg>
                <div class="view-bar">
                    <button aria-label="Refit"><svg class="ic"><use href="#i-refit"/></svg></button>
                    <button aria-label="Zoom in"><svg class="ic"><use href="#i-zin"/></svg></button>
                    <button aria-label="Zoom out"><svg class="ic"><use href="#i-zout"/></svg></button>
                    <button aria-label="Repaint"><svg class="ic"><use href="#i-repaint"/></svg></button>
                    <button class="more" aria-label="Display style"><svg class="ic"><use href="#i-shade"/></svg></button>
                    <button class="more" aria-label="Saved views"><svg class="ic"><use href="#i-saved"/></svg></button>
                    <button class="more" aria-label="Datum display"><svg class="ic"><use href="#i-dfilter"/></svg></button>
                </div>
                <div class="menu-manager">
                    <div class="mm-title">Menu Manager</div>
                    <div class="mm-body">
                        <div class="mm-head"><i class="caret"></i>AUTO ORDINATE</div>
                        <button disabled>Select</button>
                        <button disabled>Create</button>
                        <button class="current">Select Base Line</button>
                        <button class="done">Done/Return</button>
                    </div>
                </div>
            </div>
            <div class="sheets">
                <button aria-label="First sheet"><svg viewBox="0 0 16 10"><path d="M8 0v10L1 5zM15 0v10L8 5z" fill="#666"/></svg></button>
                <button aria-label="Previous sheet"><svg viewBox="0 0 16 10"><path d="M12 0v10L4 5z" fill="#aaa"/></svg></button>
                <button aria-label="Next sheet"><svg viewBox="0 0 16 10"><path d="M4 0v10l8-5z" fill="#aaa"/></svg></button>
                <button aria-label="Last sheet"><svg viewBox="0 0 16 10"><path d="M1 0v10l7-5zM8 0v10l7-5z" fill="#666"/></svg></button>
                <button class="add">+</button>
                <button class="sheet">Sheet 1</button>
            </div>
        </section>
    </main>

    <footer class="status">
        <button class="on" aria-label="Navigator"><svg class="ic"><use href="#i-nav"/></svg></button>
        <button aria-label="Browser"><svg class="ic"><use href="#i-globe"/></svg></button>
        <button aria-label="Full screen"><svg class="ic"><use href="#i-full"/></svg></button>
        <p class="message"><svg><use href="#i-go"/></svg>Select a normal to screen reference (edge, curve or datum plane) for dimension creation.</p>
        <div class="lights"><i class="light main"></i><i class="light"></i><i class="light"></i></div>
        <div class="find">
            <button aria-label="Find"><svg class="ic"><use href="#i-binoc"/></svg></button>
            <button class="drop" aria-label="Find options"><i class="caret"></i></button>
        </div>
        <div class="filter">
            <select aria-label="Selection filter"><option>All</option></select>
            <span class="filter-arrow"><i class="caret"></i></span>
        </div>
    </footer>

    <footer class="taskbar">
        <button class="start" aria-label="Start"><svg class="ic"><use href="#t-win"/></svg></button>
        <button aria-label="WeChat"><svg class="ic"><use href="#t-wechat"/></svg></button>
        <button aria-label="Capture"><svg class="ic"><use href="#t-cam"/></svg></button>
        <button class="running" aria-label="Explorer"><svg class="ic"><use href="#t-folder"/></svg></button>
        <button><span class="yd">yd</span></button>
        <button class="running" aria-label="Edge"><svg class="ic"><use href="#t-edge"/></svg></button>
        <button class="running stacked" aria-label="Creo"><svg class="ic"><use href="#t-creo"/></svg></button>
        <div class="tray">
            <svg viewBox="0 0 20 20"><path d="M2 14l8-8 8 8" fill="none" stroke="#111" stroke-width="1.500"/></svg>
            <svg viewBox="0 0 20 20"><path d="M4 6h14v9H4z" fill="#111"/><path d="M18 8h2v4h-2zM1 4h4v5H1z" fill="#111"/><path d="M2 5h2v3H2z" fill="#e2d2da"/></svg>
            <svg viewBox="0 0 20 20"><path d="M2 7h3l4-4v13l-4-4H2zM12 7l6 6M18 7l-6 6" fill="none" stroke="#111" stroke-width="1.400"/></svg>
            <svg viewBox="0 0 20 20"><path d="M2 18C2 10 8 3 17 3M6 18c0-6 5-11 12-11M10 18c0-4 3-7 8-7" fill="none" stroke="#333" stroke-width="1.200"/><circle cx="16" cy="16" r="2" fill="#111"/></svg>
            <span class="ime">英</span>
            <span class="ime-box">五</span>
            <time>8:34</time>
            <svg class="notif" viewBox="0 0 20 20"><path d="M1 1h18v15h-6l-3 3-3-3H1z" fill="none" stroke="#111" stroke-width="1.300"/></svg>
        </div>
    </footer>

    <div class="watermark">
        <svg class="flame" viewBox="0 0 20 44"><path d="M7 0c12 10 16 24 9 34-3 5-7 8-12 8 0-8 10-12 8-23C11 10 9 5 7 0zM3 9c8 7 10 17 3 24 1-8 2-14-3-24z" fill="#ff6a33"/></svg>
        <div class="wm-name"><b>野火</b>论坛</div>
        <div class="wm-url">www.proewildfire.cn</div>
    </div>
</body>
</html>
```
FILE: styles.css
```css
* {
    box-sizing: border-box;
}
body {
    margin: 0;
    height: 100vh;
    display: flex;
    flex-direction: column;
    overflow: hidden;
    background-color: #f6fafb;
    color: #484b4e;
    font-family: "Noto Sans", "Open Sans", "Noto Sans CJK SC", sans-serif;
    font-size: 14px;
    line-height: 20px;
}
button {
    display: flex;
    align-items: center;
    justify-content: center;
    margin: 0;
    padding: 0;
    border: 0;
    background: none;
    color: inherit;
    font: inherit;
    cursor: pointer;
}
.sprite {
    position: absolute;
    width: 0;
    height: 0;
}
.ic {
    flex: none;
    width: 20px;
    height: 20px;
}
.caret {
    display: inline-block;
    flex: none;
    border: 4px solid transparent;
    border-top: 6px solid #5c5f61;
    border-bottom: 0;
}
.caret.up {
    border-top: 0;
    border-bottom: 6px solid #999;
}
.drop {
    width: 16px;
}

/* title bar */
.titlebar {
    flex: none;
    display: flex;
    align-items: center;
    height: 34px;
    background-color: #dae0df;
}
.brand {
    display: flex;
    align-items: center;
    gap: 6px;
    width: 102px;
    padding-left: 8px;
    color: #5a5d60;
    font: 500 23px "Inter", sans-serif;
}
.quick {
    display: flex;
    align-items: center;
    height: 30px;
}
.quick button {
    width: 30px;
    height: 100%;
}
.quick button.drop {
    width: 16px;
}
.quick .dim .caret {
    border-top-color: #a3a8a8;
}
.split {
    display: flex;
    height: 100%;
    background-color: #dcdfdf;
    border: 1px solid #a6abab;
}
.split .drop {
    border-left: 1px solid #a6abab;
}
.quick .custom {
    margin-left: 2px;
    border-left: 1px solid #a6abab;
}
.custom .caret {
    position: relative;
}
.custom .caret::before {
    content: "";
    position: absolute;
    left: -5px;
    top: -9px;
    width: 10px;
    height: 2px;
    background-color: #444;
}
.doc-title {
    flex: 1;
    padding-left: 243px;
    color: #b5bbbb;
    font-size: 16px;
}
.win-buttons {
    display: flex;
    padding-right: 3px;
}
.win-buttons button {
    width: 33px;
}
.win-buttons svg,
.tab-tools svg {
    width: 14px;
    height: 14px;
}

/* ribbon tabs */
.tabs {
    flex: none;
    display: flex;
    height: 35px;
    background-color: #3d4546;
}
.tab {
    padding: 0 29px 0 28px;
    color: #fff;
    font-size: 16px;
}
.tab.file {
    padding: 0 24px;
    background: linear-gradient(160deg, #6ad143, #4aa52f);
}
.tab.active {
    background-color: #f8f9fb;
    color: #3e8426;
}
.tab-tools {
    display: flex;
    align-items: center;
    margin-left: auto;
    padding-bottom: 2px;
}
.tab-tools button {
    width: 29px;
    color: #fff;
}
.tab-tools .drop {
    width: 17px;
}
.tab-tools .caret {
    border-top-color: #fff;
}
.tab-tools .help {
    font-size: 16px;
    font-weight: bold;
}

/* ribbon */
.ribbon {
    flex: none;
    display: flex;
    height: 136px;
    background-color: #f8f9fb;
    border-bottom: 1px solid #a9b9ba;
}
.group {
    display: flex;
    flex-direction: column;
    margin: 1px 0 2px;
    border-right: 1px solid #b3b7b9;
}
.g-delete { width: 70px; }
.g-group { width: 255px; }
.g-annot { width: 802px; }
.g-edit { width: 489px; }
.g-format { width: 277px; }
.group-body {
    display: flex;
    height: 102px;
}
.group-name {
    flex: 1;
    padding-top: 8px;
    text-align: center;
    white-space: nowrap;
}
.group-name .caret {
    vertical-align: 3px;
}
.col {
    display: flex;
    flex-direction: column;
    padding-left: 5px;
}
.g-delete .col {
    padding-left: 24px;
}
.g-group .group-body {
    padding-left: 2px;
}
.g-group .col {
    padding-left: 6px;
}
.small {
    justify-content: flex-start;
    gap: 5px;
    height: 34px;
    white-space: nowrap;
}
.small > .caret {
    margin-left: 5px;
}
.big {
    flex-direction: column;
    justify-content: flex-start;
    gap: 12px;
    padding-top: 6px;
    white-space: nowrap;
}
.ic-big {
    flex: none;
    width: 40px;
    height: 40px;
}
.big .caret {
    margin-left: 4px;
    vertical-align: 2px;
}
.w53 { width: 53px; }
.w74 { width: 74px; }
.w86 { width: 86px; }
.w92 { width: 92px; }
.w100 { width: 100px; }
.off {
    color: #a9acae;
}
.off .caret {
    border-top-color: #999;
}
.ruled,
.c-move {
    border-right: 1px solid #b3b7b9;
}
.c-ord {
    width: 189px;
    padding-left: 3px;
}
.c-ord > .small {
    padding-left: 5px;
}
.pressed {
    display: flex;
    height: 30px;
    margin: 2px 0;
    padding-left: 4px;
    background-color: #dfe1e3;
    border: 1px solid #a9acae;
}
.pressed .small {
    flex: 1;
    height: 28px;
}
.pressed .drop {
    border-left: 1px solid #a9acae;
}
.c-sym {
    width: 186px;
    padding-left: 4px;
}
.c-move {
    width: 134px;
    padding-left: 3px;
}
.g-edit .col:last-child {
    padding-left: 2px;
}
.c-fmt {
    padding-left: 9px;
}

/* navigator */
.work {
    flex: 1;
    display: flex;
    min-height: 0;
}
.navigator {
    flex: none;
    display: flex;
    flex-direction: column;
    width: 369px;
    background-color: #f6fafb;
    border-right: 3px solid #dae0df;
    border-bottom: 1px solid #a9b9ba;
    font-size: 12px;
}
.nav-tabs {
    flex: none;
    display: flex;
    height: 32px;
    background-color: #dae0df;
}
.nav-tab {
    width: 39px;
}
.nav-tab.active {
    background-color: #f8f9fb;
}
.pane {
    display: flex;
    flex-direction: column;
    min-height: 0;
    padding: 0 6px 0 10px;
}
.drawing-pane {
    flex: 380;
}
.drawing-pane::after {
    content: "";
    flex: none;
    height: 3px;
    background-color: #dae0df;
}
.model-pane {
    flex: 375;
    padding-bottom: 7px;
}
.toolbar {
    flex: none;
    display: flex;
    align-items: center;
    height: 42px;
}
.toolbar button {
    width: 29px;
    height: 30px;
}
.toolbar .drop {
    width: 25px;
}
.toolbar .drop .caret {
    border-width: 8px 5px 0;
}
.toolbar .kind {
    width: 20px;
}
.toolbar .on {
    width: 30px;
    background-color: #dddfe1;
    border: 1px solid #b5b8ba;
}
.toolbar .last {
    margin-left: auto;
}
.grip {
    width: 3px;
    height: 18px;
    margin: 0 25px 0 7px;
    background: radial-gradient(circle, #bbb 1px, transparent 2px) 0 0 / 3px 5px;
}
.rule {
    width: 1px;
    height: 30px;
    margin: 0 6px;
    background-color: #b5b8ba;
}
.tree-box {
    flex: 1;
    display: flex;
    min-height: 0;
    background-color: #f8f9fb;
}
.tree {
    flex: 1;
    min-height: 0;
    margin: 0;
    padding: 0;
    overflow: hidden;
    list-style: none;
}
.tree li {
    display: flex;
    align-items: center;
    height: 22px;
    background-repeat: no-repeat;
}
.tree .ic {
    margin-right: 6px;
}
.lv0 {
    padding-left: 3px;
}
.lv1 {
    padding-left: 5px;
    background-image: linear-gradient(#c3c6c8, #c3c6c8);
    background-position: 13px 0;
    background-size: 1px 22px;
}
.lv1.end {
    background-size: 1px 11px;
}
.lv2 {
    padding-left: 30px;
    background-image: linear-gradient(#c3c6c8, #c3c6c8), linear-gradient(#c3c6c8, #c3c6c8);
    background-position: 13px 0, 38px 0;
    background-size: 1px 22px;
}
.lv2.only {
    background-position: 38px 0;
}
.tw {
    width: 16px;
    height: 12px;
    margin-right: 7px;
    background-color: #f8f9fb;
}
.tw::before {
    content: "";
    display: block;
    width: 0;
    margin: 2px 0 0 6px;
    border: 4px solid transparent;
    border-left: 5px solid #666;
    border-right: 0;
}
.tw.open::before {
    margin: 4px 0 0 4px;
    border: 5px solid transparent;
    border-top: 5px solid #666;
    border-bottom: 0;
}
.leaf {
    width: 12px;
    height: 1px;
    margin: 0 3px 0 8px;
    background-color: #c3c6c8;
}
.scroll {
    flex: none;
    display: flex;
    flex-direction: column;
    width: 18px;
    border: 1px solid #d0d2d4;
}
.scroll button {
    height: 17px;
    background-color: #f8f9fb;
}
.scroll .caret {
    border-top-color: #999;
}
.track {
    flex: 1;
    background-color: #dfe0e2;
}
.thumb {
    background-color: #f8f9fb;
    border: 1px solid #bbbdc0;
    border-width: 1px 0;
}

/* graphics area */
.graphics {
    flex: 1;
    display: flex;
    flex-direction: column;
    min-width: 0;
}
.canvas {
    position: relative;
    flex: 1;
    min-height: 0;
    background-color: #e8e9ed;
    border-bottom: 1px solid #8c8c8c;
}
.drawing {
    display: block;
    width: 100%;
    height: 100%;
}
.info {
    fill: #8d909d;
    font-family: "Liberation Sans", sans-serif;
    font-size: 14px;
}
.stroke-text {
    fill: #330059;
    font-family: "Noto Sans CJK SC", sans-serif;
    font-weight: 100;
}
.zone {
    fill: #000;
    font-size: 46px;
}
.callout {
    font-size: 32px;
}
.dia {
    font-family: "Liberation Sans", sans-serif;
    font-size: 34px;
    font-style: italic;
}
.view-bar {
    position: absolute;
    top: 7px;
    left: 660px;
    display: flex;
    padding: 0 2px;
    height: 38px;
    background-color: #f8f9fb;
    border: 1px solid #9b9ea0;
}
.view-bar button {
    position: relative;
    width: 32px;
}
.view-bar .more::after {
    content: "";
    position: absolute;
    right: 3px;
    bottom: 6px;
    border: 2px solid #666;
    border-top-color: transparent;
    border-left-color: transparent;
}
.menu-manager {
    position: absolute;
    top: 0;
    right: 0;
    width: 151px;
    padding: 2px 1px 2px 2px;
    background-color: #e8e9eb;
    border-left: 1px solid #fff;
    border-bottom: 1px solid #b5b8ba;
    box-shadow: -1px 2px 8px rgba(0, 0, 0, 0.4);
    white-space: nowrap;
}
.mm-title {
    height: 36px;
    line-height: 38px;
    color: #a3a5a7;
    text-align: center;
}
.mm-head {
    display: flex;
    align-items: center;
    gap: 9px;
    height: 25px;
    padding-left: 4px;
    background-color: #c6c9cb;
    border-bottom: 1px solid #a5a8aa;
    color: #2d2f31;
}
.mm-head .caret {
    border-width: 8px 8px 0;
    border-top-color: #222;
}
.mm-body {
    background-color: #fff;
    border-left: 1px solid #a5a8aa;
}
.mm-body button {
    justify-content: flex-start;
    width: 100%;
    height: 26px;
    padding-left: 25px;
}
.mm-body button:disabled {
    color: #abadaf;
}
.mm-body .current {
    background-color: #58595b;
    color: #fff;
}
.mm-body .done {
    font-weight: bold;
}
.sheets {
    flex: none;
    display: flex;
    height: 35px;
    padding-left: 2px;
    background: linear-gradient(#f4f4f4 3px, #8c8c8c 3px, #8c8c8c 4px, #dedede 4px);
    border-bottom: 2px solid #8c8c8c;
}
.sheets button {
    width: 21px;
    margin-top: 3px;
}
.sheets svg {
    width: 16px;
    height: 10px;
}
.sheets .add {
    width: 25px;
    height: 21px;
    margin: 7px 0 0 6px;
    border: 1px solid #8c8c8c;
    font-size: 16px;
    font-weight: bold;
}
.sheets .sheet {
    width: 88px;
    background-color: #f4f4f4;
    border: 1px solid #8c8c8c;
    border-top: 0;
    font-weight: bold;
}

/* status bar */
.status {
    flex: none;
    display: flex;
    align-items: center;
    height: 42px;
    padding: 0 22px 0 7px;
    background-color: #f6fafb;
}
.status button {
    width: 26px;
    height: 29px;
}
.status > button + button {
    margin-left: 4px;
}
.status .on {
    background-color: #e1e3e5;
    border: 1px solid #b5b8ba;
}
.message {
    flex: 1;
    display: flex;
    align-items: center;
    gap: 2px;
    height: 30px;
    margin: 0 0 0 10px;
    padding-left: 3px;
    border-left: 1px solid #b5b8ba;
    font-size: 12px;
}
.message svg {
    width: 14px;
    height: 16px;
}
.lights {
    display: flex;
    align-items: center;
    gap: 2px;
    width: 41px;
    height: 31px;
    padding-left: 5px;
    border: 1px solid #b5b8ba;
    border-width: 0 1px;
}
.light {
    width: 8px;
    height: 8px;
    border-radius: 50%;
    background-color: #d3d6d8;
}
.light.main {
    width: 13px;
    height: 13px;
    background-color: #bcbfc1;
}
.find {
    display: flex;
    padding: 1px 2px;
    border-right: 1px solid #b5b8ba;
}
.find button {
    width: 34px;
    border: 1px solid #b5b8ba;
}
.find .drop {
    width: 18px;
    border-left: 0;
}
.filter {
    display: flex;
    width: 217px;
    height: 28px;
    margin-left: 119px;
    border: 1px solid #b0b3b5;
    background-color: #f8f8f8;
}
.filter select {
    flex: 1;
    padding: 0 8px;
    border: 0;
    background: none;
    appearance: none;
    color: #6b6e70;
    font: inherit;
}
.filter-arrow {
    display: flex;
    align-items: center;
    justify-content: center;
    width: 19px;
    border-left: 1px solid #b0b3b5;
}

/* windows taskbar */
.taskbar {
    flex: none;
    display: flex;
    height: 38px;
    background: linear-gradient(90deg, #e1d1e1, #e4d0de 50%, #e6d3d9);
    color: #111;
}
.taskbar button {
    width: 36px;
    margin-right: 10px;
}
.taskbar .start {
    width: 44px;
    margin-right: 9px;
}
.running {
    border-bottom: 3px solid #0078d7;
    border-top: 3px solid transparent;
}
.stacked {
    border-image: linear-gradient(90deg, #0078d7 70%, #66a9e0 70%) 3;
    border-top: 0;
    padding-top: 3px;
}
.yd {
    width: 20px;
    border-radius: 4px;
    background-color: #f5224a;
    color: #fff;
    font-size: 12px;
    font-weight: bold;
}
.tray {
    display: flex;
    align-items: center;
    margin-left: auto;
    margin-right: 4px;
    padding-right: 26px;
    border-right: 1px solid #b5a5ad;
}
.tray svg {
    width: 20px;
    height: 20px;
    margin-right: 10px;
}
.tray .notif {
    margin: 0;
}
.tray time {
    width: 100px;
    padding-right: 18px;
    text-align: center;
}
.ime {
    width: 30px;
    font-size: 20px;
}
.ime-box {
    width: 20px;
    height: 20px;
    margin: 0 17px 0 6px;
    border: 1px solid #111;
    background-color: #fff;
    font-size: 14px;
    line-height: 17px;
    text-align: center;
}

/* forum stamp */
.watermark {
    position: absolute;
    right: 17px;
    bottom: 6px;
    width: 168px;
    pointer-events: none;
}
.flame {
    position: absolute;
    left: 64px;
    top: -18px;
    width: 19px;
    height: 42px;
}
.wm-name {
    height: 42px;
    color: #000;
    font: 300 42px/42px "Noto Sans CJK SC", sans-serif;
    white-space: nowrap;
}
.wm-name b {
    color: #ff6a33;
    font-weight: 300;
}
.wm-url {
    color: #8c8488;
    font: italic 16px/20px "DejaVu Sans", sans-serif;
    text-align: center;
}
```
